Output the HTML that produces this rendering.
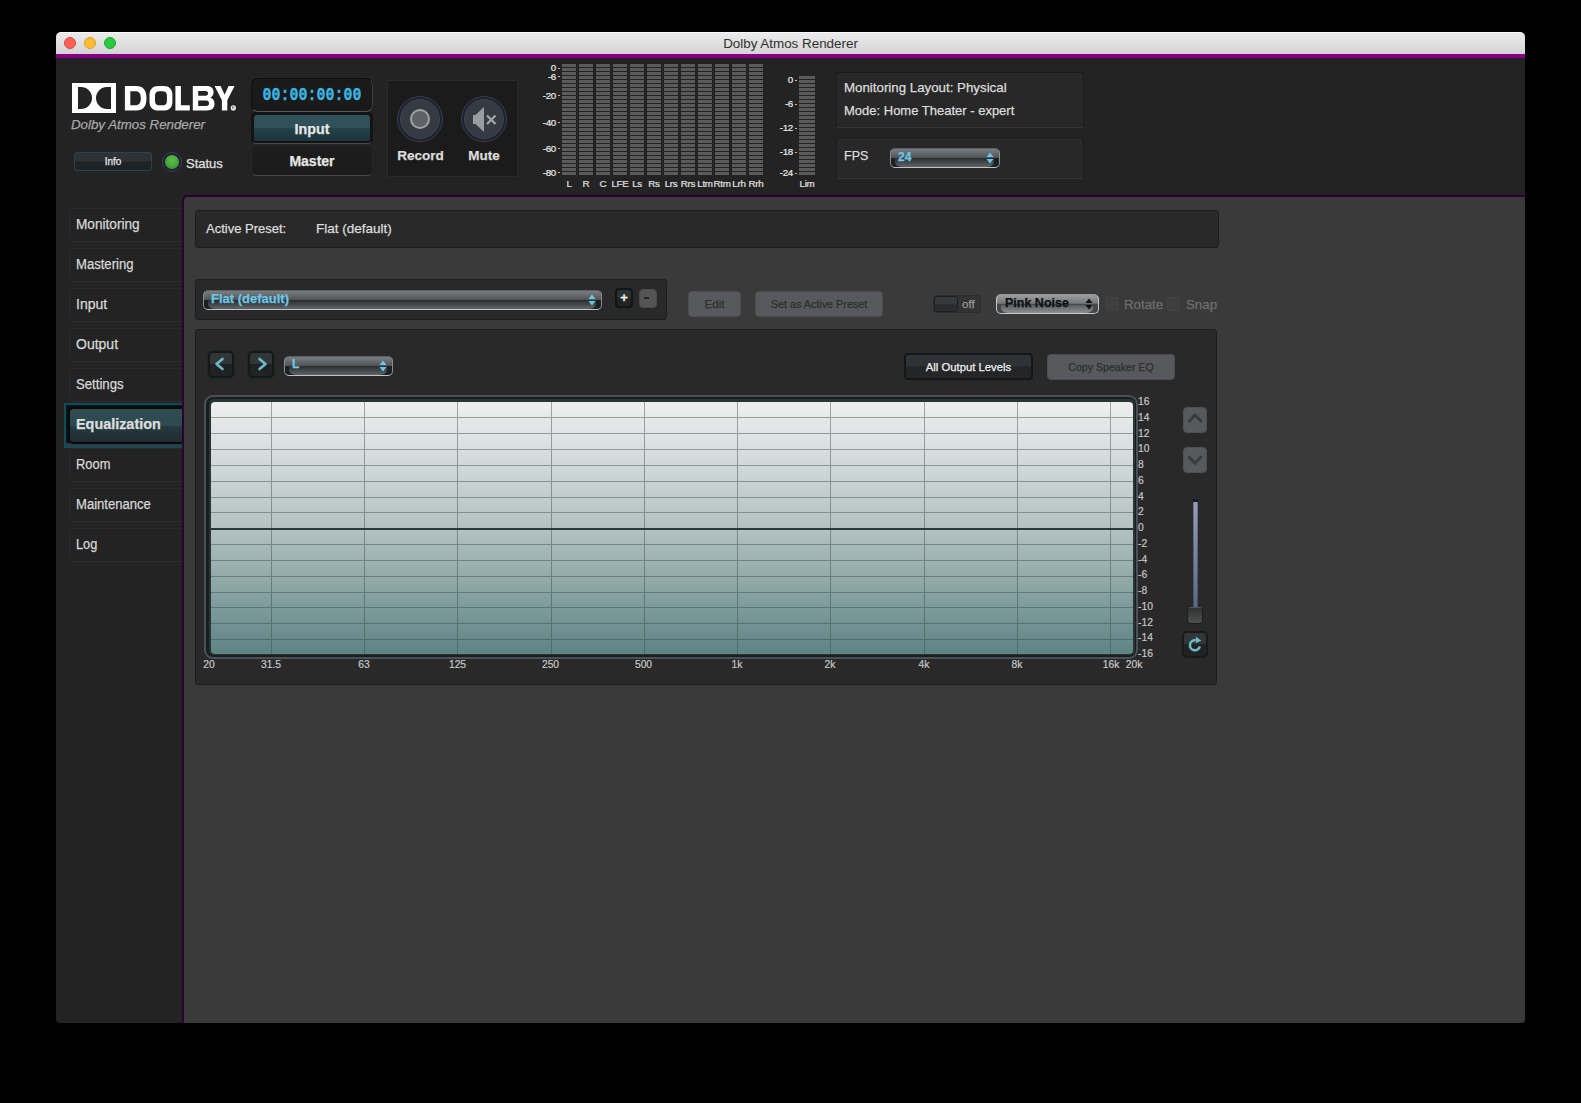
<!DOCTYPE html>
<html><head><meta charset="utf-8">
<style>
*{box-sizing:border-box;margin:0;padding:0}
html,body{width:1581px;height:1103px;background:#000;overflow:hidden;font-family:"Liberation Sans",sans-serif;color:#dcdcdc}
div,span{position:absolute}
.win{left:56px;top:32px;width:1469px;height:991px;background:#232323;border-radius:5px 5px 4px 4px;overflow:hidden}
.title{left:56px;top:32px;width:1469px;height:22px;background:linear-gradient(#ebebeb,#d4d4d4);border-top:1px solid #f8f8f8;border-radius:5px 5px 0 0}
.title .t{left:0;width:100%;top:3px;text-align:center;font-size:13.4px;color:#303030}
.tl{top:5px;width:12px;height:12px;border-radius:50%}
.purple{left:56px;top:54px;width:1469px;height:4px;background:#870083}
.side{left:69px;width:114px;height:34px;border:1px solid #2c2c2c;border-right:none;border-radius:5px 0 0 5px;background:#232323}
.side span{-webkit-text-stroke:0.25px currentColor;left:6px;top:7px;font-size:14px;color:#d8d8d8;white-space:pre;transform-origin:0 0}
.lbl{white-space:pre;-webkit-text-stroke:0.25px currentColor}
.seg{background:repeating-linear-gradient(#5b5b5b 0,#5b5b5b 3px,#222 3px,#222 4px)}
.ml{-webkit-text-stroke:0.2px currentColor;font-size:9.8px;color:#e0e0e0;text-align:center;white-space:pre;letter-spacing:-0.3px}
.sl{-webkit-text-stroke:0.2px currentColor;font-size:9.8px;color:#ececec;text-align:right;white-space:pre;letter-spacing:-0.3px}
.dd{border:1px solid #8a8e92;border-top-color:#5c6062;border-bottom-color:#c2c2cc;border-radius:5px;background:linear-gradient(#7a7e80 0,#505456 48%,#1a1f22 50%,#1c2124 100%);overflow:hidden}
.dd::after{content:"";position:absolute;left:4px;right:5px;top:52%;bottom:0;border-radius:0 0 7px 7px/0 0 5px 5px;background:linear-gradient(#272c2f,#606466)}
.ddl{border:1px solid #c8c8c8;border-top-color:#9a9a9a;border-radius:5px;background:linear-gradient(#9a9ea0 0,#74787a 46%,#44484a 52%,#44484a 100%);overflow:hidden}
.ddl::after{content:"";position:absolute;left:4px;right:5px;top:54%;bottom:0;border-radius:0 0 7px 7px/0 0 5px 5px;background:linear-gradient(#5a5e60,#8c9092)}
.btn{border:1px solid #4b4d4f;border-radius:4px;background:#57595c}
.btxt{font-size:11.5px;color:#2e2e30;text-align:center}
.nb{width:26px;height:27px;border:2px solid #171919;border-radius:5px;background:linear-gradient(#323637 0,#323637 45%,#202223 50%,#202223 100%);box-shadow:0 0 0 1px #1b2626}
.gl{-webkit-text-stroke:0.2px currentColor;font-size:10.3px;color:#c6c6c6;white-space:pre}
.ab{width:24px;height:26px;border:1px solid #4e5052;border-radius:4px;background:#57595c}
</style></head><body>
<div class="win"></div>
<div class="title"><div class="t">Dolby Atmos Renderer</div>
  <div class="tl" style="top:4px;left:8px;background:#fe5f57;border:1px solid #e0443e"></div>
  <div class="tl" style="top:4px;left:28px;background:#febc2e;border:1px solid #dea123"></div>
  <div class="tl" style="top:4px;left:48px;background:#28c840;border:1px solid #1aab29"></div>
</div>
<div class="purple"></div>

<!-- HEADER -->
<!-- dolby logo -->
<div style="left:72px;top:83px;width:44px;height:30px;background:#fff"></div>
<svg style="position:absolute;left:72px;top:83px" width="44" height="30" viewBox="0 0 44 30">
  <path d="M6 4 H9 A11 11 0 0 1 9 26 H6 Z" fill="#232323"/>
  <path d="M39 4 H35 A11 11 0 0 0 35 26 H39 Z" fill="#232323"/>
</svg>
<svg style="position:absolute;left:124px;top:85.5px" width="115" height="26.5" viewBox="0 0 115 27" preserveAspectRatio="none">
<g fill="#fff" fill-rule="evenodd">
<path d="M0.9 0 H12 C19.5 0 22.5 4.5 22.5 12.5 C22.5 20.5 19.5 25 12 25 H0.9 Z M6.3 5.3 H11.3 C15.3 5.3 16.8 7.8 16.8 12.5 C16.8 17.2 15.3 19.7 11.3 19.7 H6.3 Z"/>
<path d="M34.5 0 H39.4 C45.4 0 48.4 3.5 48.4 9 V16 C48.4 21.5 45.4 25 39.4 25 H34.5 C28.5 25 25.5 21.5 25.5 16 V9 C25.5 3.5 28.5 0 34.5 0 Z M35.5 5.3 C32.5 5.3 31 6.8 31 9.8 V15.2 C31 18.2 32.5 19.7 35.5 19.7 H38.4 C41.4 19.7 42.9 18.2 42.9 15.2 V9.8 C42.9 6.8 41.4 5.3 38.4 5.3 Z"/>
<path d="M51.4 0 H56.9 V19.7 H65.8 V25 H51.4 Z"/>
<path d="M68.8 0 H82.5 C87.3 0 89.6 2.5 89.6 6.3 C89.6 9 88.4 10.9 86.3 11.8 C89 12.7 90.5 15 90.5 18.2 C90.5 22.5 88 25 82.8 25 H68.8 Z M74.2 5 H81.6 C83.3 5 84.1 5.9 84.1 7.5 C84.1 9.1 83.3 10 81.6 10 H74.2 Z M74.2 14.8 H82.2 C84.1 14.8 85 15.8 85 17.6 C85 19.4 84.1 20.3 82.2 20.3 H74.2 Z"/>
<path d="M90.6 0 H96.6 L100.6 9 L104.6 0 H110.6 L103.3 14.6 V25 H97.9 V14.6 Z"/>
<circle cx="109.3" cy="22.3" r="2.6"/>
</g>
<path d="M108.3 23.8 V20.8 H109.7 C110.5 20.8 110.5 22.2 109.7 22.2 H108.3 M109.4 22.2 L110.4 23.8" fill="none" stroke="#555" stroke-width="0.6"/>
</svg>
<span class="lbl" style="left:71px;top:116.5px;font-size:13.3px;font-style:italic;color:#a8a8a8">Dolby Atmos Renderer</span>

<!-- info / status -->
<div style="left:74px;top:152px;width:78px;height:19px;border:1px solid #23474d;border-radius:3px;background:linear-gradient(#2e3234 0,#2e3234 45%,#1f2224 55%,#1f2224 100%)"></div>
<span class="lbl" style="left:74px;top:155.5px;width:78px;text-align:center;font-size:10px;color:#e8e8e8">Info</span>
<div style="left:162px;top:152px;width:20px;height:20px;border-radius:50%;background:#1e2130;border:1px solid #3a3f55"></div>
<div style="left:165px;top:155px;width:14px;height:14px;border-radius:50%;background:radial-gradient(circle at 50% 35%,#5fbd4f,#2e8f2a)"></div>
<span class="lbl" style="left:186px;top:156px;font-size:13px;color:#e0e0e0">Status</span>

<!-- timecode -->
<div style="left:251px;top:78px;width:122px;height:34px;border:1px solid #101010;border-right-color:#3e3e3e;border-bottom-color:#5a5a5a;border-radius:7px;background:#1a1a1a"></div>
<span class="lbl" style="left:251px;top:87px;width:122px;text-align:center;font-family:'Liberation Mono';font-weight:bold;font-size:15px;color:#3cb6e4;transform:scaleY(1.17);transform-origin:50% 50%">00:00:00:00</span>
<div style="left:251px;top:112px;width:122px;height:32px;border:1px solid #141414;border-bottom-color:#4a4a4a;border-radius:5px;background:#141414"></div>
<div style="left:254px;top:115px;width:116px;height:26px;border-radius:3px;background:linear-gradient(#30505a 0,#30505a 50%,#244048 52%,#1d353c 100%)"></div>
<span class="lbl" style="left:251px;top:120.5px;width:122px;text-align:center;font-size:14.3px;font-weight:bold;color:#e6e6e6">Input</span>
<div style="left:251px;top:145px;width:122px;height:31px;border:1px solid #262626;border-bottom-color:#4a4a4a;border-radius:5px;background:#1c1c1c"></div>
<span class="lbl" style="left:251px;top:153px;width:122px;text-align:center;font-size:14px;font-weight:bold;color:#e6e6e6">Master</span>

<!-- record / mute -->
<div style="left:387px;top:80px;width:131px;height:97px;border:1px solid #2a2a2a;background:#1b1b1b"></div>
<div style="left:397px;top:96px;width:46px;height:46px;border-radius:50%;background:#1c2030;border:1px solid #3b3f4d"></div>
<div style="left:400px;top:99px;width:40px;height:40px;border-radius:50%;background:#363a42;border:1px solid #40444a"></div>
<div style="left:410px;top:109px;width:20px;height:20px;border-radius:50%;border:2px solid #a0a3a6;background:#5e6266"></div>
<span class="lbl" style="left:387px;top:148px;width:67px;text-align:center;font-size:13.5px;font-weight:bold;color:#dcdcdc">Record</span>
<div style="left:461px;top:96px;width:46px;height:46px;border-radius:50%;background:#1c2030;border:1px solid #3b3f4d"></div>
<div style="left:464px;top:99px;width:40px;height:40px;border-radius:50%;background:#363a42;border:1px solid #40444a"></div>
<svg style="position:absolute;left:461px;top:96px" width="46" height="46" viewBox="0 0 46 46">
  <path d="M12 19 H14.5 L23 11 V36 L14.5 28 H12 Z" fill="#9a9d9f"/>
  <path d="M26 19.5 L34.5 28 M34.5 19.5 L26 28" stroke="#a5a8aa" stroke-width="2.2"/>
</svg>
<span class="lbl" style="left:452px;top:148px;width:64px;text-align:center;font-size:13.5px;font-weight:bold;color:#dcdcdc">Mute</span>

<!-- meters -->
<div class="seg" style="left:562px;top:64px;width:14px;height:112px"></div>
<span class="ml" style="left:556px;top:178px;width:26px">L</span>
<div class="seg" style="left:579px;top:64px;width:14px;height:112px"></div>
<span class="ml" style="left:573px;top:178px;width:26px">R</span>
<div class="seg" style="left:596px;top:64px;width:14px;height:112px"></div>
<span class="ml" style="left:590px;top:178px;width:26px">C</span>
<div class="seg" style="left:613px;top:64px;width:14px;height:112px"></div>
<span class="ml" style="left:607px;top:178px;width:26px">LFE</span>
<div class="seg" style="left:630px;top:64px;width:14px;height:112px"></div>
<span class="ml" style="left:624px;top:178px;width:26px">Ls</span>
<div class="seg" style="left:647px;top:64px;width:14px;height:112px"></div>
<span class="ml" style="left:641px;top:178px;width:26px">Rs</span>
<div class="seg" style="left:664px;top:64px;width:14px;height:112px"></div>
<span class="ml" style="left:658px;top:178px;width:26px">Lrs</span>
<div class="seg" style="left:681px;top:64px;width:14px;height:112px"></div>
<span class="ml" style="left:675px;top:178px;width:26px">Rrs</span>
<div class="seg" style="left:698px;top:64px;width:14px;height:112px"></div>
<span class="ml" style="left:692px;top:178px;width:26px">Ltm</span>
<div class="seg" style="left:715px;top:64px;width:14px;height:112px"></div>
<span class="ml" style="left:709px;top:178px;width:26px">Rtm</span>
<div class="seg" style="left:732px;top:64px;width:14px;height:112px"></div>
<span class="ml" style="left:726px;top:178px;width:26px">Lrh</span>
<div class="seg" style="left:749px;top:64px;width:14px;height:112px"></div>
<span class="ml" style="left:743px;top:178px;width:26px">Rrh</span>
<span class="sl" style="left:520px;top:62px;width:36px">0</span>
<div style="left:558px;top:68px;width:2px;height:1px;background:#bbb"></div>
<span class="sl" style="left:520px;top:70.5px;width:36px">-6</span>
<div style="left:558px;top:76px;width:2px;height:1px;background:#bbb"></div>
<span class="sl" style="left:520px;top:89.5px;width:36px">-20</span>
<div style="left:558px;top:95px;width:2px;height:1px;background:#bbb"></div>
<span class="sl" style="left:520px;top:116.5px;width:36px">-40</span>
<div style="left:558px;top:122px;width:2px;height:1px;background:#bbb"></div>
<span class="sl" style="left:520px;top:142.5px;width:36px">-60</span>
<div style="left:558px;top:148px;width:2px;height:1px;background:#bbb"></div>
<span class="sl" style="left:520px;top:166.5px;width:36px">-80</span>
<div style="left:558px;top:172px;width:2px;height:1px;background:#bbb"></div>
<div class="seg" style="left:799px;top:76px;width:16px;height:100px"></div>
<span class="ml" style="left:794px;top:178px;width:26px">Lim</span>
<span class="sl" style="left:757px;top:74px;width:36px">0</span>
<div style="left:795px;top:80px;width:2px;height:1px;background:#bbb"></div>
<span class="sl" style="left:757px;top:98px;width:36px">-6</span>
<div style="left:795px;top:104px;width:2px;height:1px;background:#bbb"></div>
<span class="sl" style="left:757px;top:122px;width:36px">-12</span>
<div style="left:795px;top:128px;width:2px;height:1px;background:#bbb"></div>
<span class="sl" style="left:757px;top:146px;width:36px">-18</span>
<div style="left:795px;top:152px;width:2px;height:1px;background:#bbb"></div>
<span class="sl" style="left:757px;top:167px;width:36px">-24</span>
<div style="left:795px;top:173px;width:2px;height:1px;background:#bbb"></div>

<!-- monitoring info -->
<div style="left:836px;top:72px;width:248px;height:56px;border:1px solid #1b1b1b;border-bottom-color:#353535;border-radius:3px;background:#282828"></div>
<span class="lbl" style="left:844px;top:80px;font-size:13.3px;color:#dcdcdc">Monitoring Layout: Physical</span>
<span class="lbl" style="left:844px;top:103px;font-size:13px;color:#dcdcdc">Mode: Home Theater - expert</span>
<div style="left:836px;top:137px;width:248px;height:42px;border:1px solid #1b1b1b;border-bottom-color:#353535;border-radius:3px;background:#282828"></div>
<span class="lbl" style="left:844px;top:149px;font-size:12.5px;color:#dcdcdc">FPS</span>
<div class="dd" style="left:890px;top:148px;width:110px;height:20px"></div>
<span class="lbl" style="left:898px;top:150px;font-size:12px;font-weight:bold;color:#6cc6e8">24</span>
<svg style="position:absolute;left:985px;top:151px" width="10" height="14" viewBox="0 0 10 14"><path d="M1.5 6 L5 1.5 L8.5 6 Z M1.5 8 L5 12.5 L8.5 8 Z" fill="#6cc6e8"/></svg>

<!-- header bottom border -->
<div style="left:184px;top:195px;width:1341px;height:2px;background:#2a0030"></div>

<!-- sidebar -->
<div class="side" style="top:208px"><span style="transform:scaleX(0.974)">Monitoring</span></div>
<div class="side" style="top:248px"><span style="transform:scaleX(0.935)">Mastering</span></div>
<div class="side" style="top:288px"><span style="transform:scaleX(1.0)">Input</span></div>
<div class="side" style="top:328px"><span style="transform:scaleX(1.0)">Output</span></div>
<div class="side" style="top:368px"><span style="transform:scaleX(0.94)">Settings</span></div>
<div style="left:64px;top:403px;width:120px;height:45px;border:2px solid #0c4e5b;border-right:none;background:#101010;box-shadow:inset 0 -3px 0 #3a3a3a"></div>
<div style="left:68px;top:407px;width:115px;height:37px;border-radius:5px 0 0 5px;background:linear-gradient(#2e4b51 0,#2e4b51 50%,#253a3f 53%,#1e2d31 100%);border:2px solid #0a0a0a;border-right:none"></div>
<span class="lbl" style="left:76px;top:415.5px;font-size:14.4px;font-weight:bold;color:#dedede">Equalization</span>
<div class="side" style="top:448px"><span style="transform:scaleX(0.92)">Room</span></div>
<div class="side" style="top:488px"><span style="transform:scaleX(0.933)">Maintenance</span></div>
<div class="side" style="top:528px"><span style="transform:scaleX(0.91)">Log</span></div>

<!-- main panel -->
<div style="left:182px;top:195px;width:1343px;height:828px;border-left:2px solid #2a0030;border-top:2px solid #2a0030;border-radius:6px 0 4px 0;background:#3a3a3a"></div>

<!-- active preset -->
<div style="left:195px;top:210px;width:1024px;height:38px;border:1px solid #1e1e1e;border-radius:3px;background:#292929"></div>
<span class="lbl" style="left:206px;top:221px;font-size:13px;color:#dcdcdc">Active Preset:</span>
<span class="lbl" style="left:316px;top:221px;font-size:13.5px;color:#dcdcdc">Flat (default)</span>

<!-- preset selector -->
<div style="left:195px;top:279px;width:472px;height:41px;border:1px solid #1e1e1e;border-radius:3px;background:#292929"></div>
<div class="dd" style="left:203px;top:290px;width:399px;height:20px"></div>
<span class="lbl" style="left:211px;top:291px;font-size:13px;font-weight:bold;color:#6cc6e8">Flat (default)</span>
<svg style="position:absolute;left:587px;top:293px" width="10" height="14" viewBox="0 0 10 14"><path d="M1.5 6 L5 1.5 L8.5 6 Z M1.5 8 L5 12.5 L8.5 8 Z" fill="#6cc6e8"/></svg>
<div style="left:615px;top:288px;width:18px;height:20px;border:2px solid #101616;border-radius:4px;background:linear-gradient(#2c3132 0,#2c3132 48%,#222424 52%,#222424 100%)"></div>
<span class="lbl" style="left:615px;top:290px;width:18px;text-align:center;font-size:13px;font-weight:bold;color:#f0f0f0">+</span>
<div style="left:639px;top:289px;width:18px;height:19px;border:1px solid #4a4a4a;border-radius:4px;background:#555"></div>
<div style="left:644px;top:297px;width:5px;height:2px;background:#262626"></div>

<div class="btn" style="left:688px;top:291px;width:53px;height:26px"></div>
<span class="lbl btxt" style="left:688px;top:298px;width:53px">Edit</span>
<div class="btn" style="left:755px;top:291px;width:128px;height:26px"></div>
<span class="lbl btxt" style="left:755px;top:298px;width:128px;font-size:10.8px">Set as Active Preset</span>

<div style="left:933px;top:295px;width:48px;height:18px;border:1px solid #2e2e2e;border-radius:3px;background:#333"></div>
<div style="left:934px;top:296px;width:24px;height:16px;border:1px solid #1f1f1f;border-radius:3px;background:linear-gradient(#363a3c 0,#363a3c 45%,#2a2c2e 55%,#2a2c2e 100%)"></div>
<span class="lbl" style="left:962px;top:298px;font-size:11.5px;color:#9a9a9a">off</span>

<div class="ddl" style="left:996px;top:294px;width:103px;height:20px"></div>
<span class="lbl" style="left:1005px;top:295.5px;font-size:12.5px;font-weight:bold;color:#111">Pink Noise</span>
<svg style="position:absolute;left:1084px;top:297px" width="10" height="14" viewBox="0 0 10 14"><path d="M1.5 6 L5 1.5 L8.5 6 Z M1.5 8 L5 12.5 L8.5 8 Z" fill="#111"/></svg>
<div style="left:1106px;top:297px;width:13px;height:14px;border:1px solid #444;border-radius:2px;background:#3f3f3f"></div>
<span class="lbl" style="left:1124px;top:297px;font-size:13.3px;color:#6e6e6e">Rotate</span>
<div style="left:1167px;top:297px;width:13px;height:14px;border:1px solid #444;border-radius:2px;background:#3f3f3f"></div>
<span class="lbl" style="left:1186px;top:297px;font-size:13.3px;color:#6e6e6e">Snap</span>

<!-- EQ panel -->
<div style="left:195px;top:329px;width:1022px;height:356px;border:1px solid #1e1e1e;border-radius:3px;background:#292929"></div>


<!-- nav buttons -->
<div class="nb" style="left:208px;top:351px"></div>
<svg style="position:absolute;left:208px;top:351px" width="26" height="27" viewBox="0 0 26 27"><path d="M14.5 8 L8.5 13 L14.5 18" fill="none" stroke="#6bbcc8" stroke-width="2.6" stroke-linecap="round" stroke-linejoin="round"/></svg>
<div class="nb" style="left:248px;top:351px"></div>
<svg style="position:absolute;left:248px;top:351px" width="26" height="27" viewBox="0 0 26 27"><path d="M11.5 8 L17.5 13 L11.5 18" fill="none" stroke="#6bbcc8" stroke-width="2.6" stroke-linecap="round" stroke-linejoin="round"/></svg>
<div class="dd" style="left:284px;top:356px;width:109px;height:20px"></div>
<span class="lbl" style="left:292px;top:357px;font-size:12px;font-weight:bold;color:#6cc6e8">L</span>
<svg style="position:absolute;left:378px;top:359px" width="10" height="14" viewBox="0 0 10 14"><path d="M1.5 6 L5 1.5 L8.5 6 Z M1.5 8 L5 12.5 L8.5 8 Z" fill="#6cc6e8"/></svg>

<div style="left:904px;top:353px;width:129px;height:27px;border:2px solid #151717;border-radius:4px;background:linear-gradient(#2f3335 0,#2f3335 48%,#232527 52%,#232527 100%)"></div>
<span class="lbl" style="left:904px;top:361px;width:129px;text-align:center;font-size:11.3px;color:#f0f0f0">All Output Levels</span>
<div style="left:1047px;top:354px;width:128px;height:26px;border:1px solid #4b4d4f;border-radius:4px;background:#57595c"></div>
<span class="lbl" style="left:1047px;top:361px;width:128px;text-align:center;font-size:10.6px;color:#2e2e30">Copy Speaker EQ</span>

<!-- graph frame -->
<div style="left:204px;top:395px;width:934px;height:264px;border-radius:9px;background:#4b5056"></div>
<div style="left:206px;top:397px;width:930px;height:260px;border-radius:7px;background:#17201f"></div>
<div style="left:209px;top:399px;width:926px;height:256px;border-radius:5px;background:#2a3434"></div>
<svg style="position:absolute;left:211px;top:402px" width="922" height="252" viewBox="0 0 922 252">
<defs><linearGradient id="gg" x1="0" y1="0" x2="0" y2="1"><stop offset="0" stop-color="#eeeeee"/><stop offset="0.5" stop-color="#b4c2c2"/><stop offset="1" stop-color="#5e8484"/></linearGradient>
<linearGradient id="gl" gradientUnits="userSpaceOnUse" x1="0" y1="0" x2="0" y2="252"><stop offset="0" stop-color="#9ea2a2"/><stop offset="0.5" stop-color="#7c8a8a"/><stop offset="1" stop-color="#4e6868"/></linearGradient></defs>
<rect x="0" y="0" width="922" height="252" rx="4" fill="url(#gg)"/>
<g fill="url(#gl)"><rect x="60" y="0" width="1" height="252"/><rect x="153" y="0" width="1" height="252"/><rect x="246" y="0" width="1" height="252"/><rect x="340" y="0" width="1" height="252"/><rect x="433" y="0" width="1" height="252"/><rect x="526" y="0" width="1" height="252"/><rect x="619" y="0" width="1" height="252"/><rect x="713" y="0" width="1" height="252"/><rect x="806" y="0" width="1" height="252"/><rect x="899" y="0" width="1" height="252"/><rect x="0" y="15" width="922" height="1"/><rect x="0" y="31" width="922" height="1"/><rect x="0" y="47" width="922" height="1"/><rect x="0" y="63" width="922" height="1"/><rect x="0" y="79" width="922" height="1"/><rect x="0" y="95" width="922" height="1"/><rect x="0" y="110" width="922" height="1"/><rect x="0" y="142" width="922" height="1"/><rect x="0" y="158" width="922" height="1"/><rect x="0" y="174" width="922" height="1"/><rect x="0" y="190" width="922" height="1"/><rect x="0" y="205" width="922" height="1"/><rect x="0" y="221" width="922" height="1"/><rect x="0" y="237" width="922" height="1"/></g>
<rect x="0" y="126" width="922" height="2" fill="#263a3a"/>
</svg>
<span class="gl" style="left:189px;top:659px;width:40px;text-align:center">20</span>
<span class="gl" style="left:251px;top:659px;width:40px;text-align:center">31.5</span>
<span class="gl" style="left:344px;top:659px;width:40px;text-align:center">63</span>
<span class="gl" style="left:437.5px;top:659px;width:40px;text-align:center">125</span>
<span class="gl" style="left:530.5px;top:659px;width:40px;text-align:center">250</span>
<span class="gl" style="left:623.5px;top:659px;width:40px;text-align:center">500</span>
<span class="gl" style="left:717px;top:659px;width:40px;text-align:center">1k</span>
<span class="gl" style="left:810px;top:659px;width:40px;text-align:center">2k</span>
<span class="gl" style="left:904px;top:659px;width:40px;text-align:center">4k</span>
<span class="gl" style="left:997px;top:659px;width:40px;text-align:center">8k</span>
<span class="gl" style="left:1091px;top:659px;width:40px;text-align:center">16k</span>
<span class="gl" style="left:1114px;top:659px;width:40px;text-align:center">20k</span>
<span class="gl" style="left:1138px;top:396.0px">16</span>
<span class="gl" style="left:1138px;top:411.8px">14</span>
<span class="gl" style="left:1138px;top:427.5px">12</span>
<span class="gl" style="left:1138px;top:443.2px">10</span>
<span class="gl" style="left:1138px;top:459.0px">8</span>
<span class="gl" style="left:1138px;top:474.8px">6</span>
<span class="gl" style="left:1138px;top:490.5px">4</span>
<span class="gl" style="left:1138px;top:506.2px">2</span>
<span class="gl" style="left:1138px;top:522.0px">0</span>
<span class="gl" style="left:1138px;top:537.8px">-2</span>
<span class="gl" style="left:1138px;top:553.5px">-4</span>
<span class="gl" style="left:1138px;top:569.2px">-6</span>
<span class="gl" style="left:1138px;top:585.0px">-8</span>
<span class="gl" style="left:1138px;top:600.8px">-10</span>
<span class="gl" style="left:1138px;top:616.5px">-12</span>
<span class="gl" style="left:1138px;top:632.2px">-14</span>
<span class="gl" style="left:1138px;top:648.0px">-16</span>

<!-- right controls -->
<div class="ab" style="left:1183px;top:407px"></div>
<svg style="position:absolute;left:1183px;top:407px" width="25" height="26" viewBox="0 0 25 26"><path d="M6.2 14 L12 8 L17.8 14" fill="none" stroke="#3a3b3d" stroke-width="3" stroke-linecap="round" stroke-linejoin="round"/></svg>
<div class="ab" style="left:1183px;top:447px"></div>
<svg style="position:absolute;left:1183px;top:447px" width="25" height="26" viewBox="0 0 25 26"><path d="M6.2 10.3 L12 16.1 L17.8 10.3" fill="none" stroke="#3a3b3d" stroke-width="3" stroke-linecap="round" stroke-linejoin="round"/></svg>
<div style="left:1193px;top:499px;width:5px;height:110px;background:linear-gradient(#1a1a2a 0,#1a1a2a 3px,#969cbc 3px,#5a6888 100%);box-shadow:inset 1px 0 0 rgba(0,0,0,.25),inset -1px 0 0 rgba(0,0,0,.25)"></div>
<div style="left:1187px;top:607px;width:16px;height:17px;border:1px solid #1d1d1d;border-radius:4px;background:linear-gradient(#303232,#4a504e);border-top-color:#505656"></div>
<div style="left:1182px;top:631px;width:26px;height:27px;border:2px solid #181a1a;border-radius:5px;background:linear-gradient(#323637 0,#323637 45%,#202223 50%,#202223 100%)"></div>
<svg style="position:absolute;left:1182px;top:631px" width="26" height="27" viewBox="0 0 26 27"><path d="M17.8 15.4 A5 5 0 1 1 13.6 9.3" fill="none" stroke="#6bbcc8" stroke-width="2.5"/><path d="M13.8 5.6 L19.3 9.8 L13.8 12 Z" fill="#6bbcc8"/></svg>

</body></html>
